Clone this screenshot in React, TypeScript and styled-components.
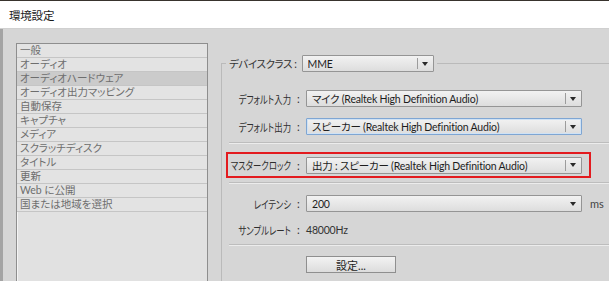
import React from "react";
import styled, { createGlobalStyle } from "styled-components";

const Global = createGlobalStyle`
  html, body { margin: 0; padding: 0; background: #d6d6d6; overflow: hidden; }
  body {
    font-family: Lato, "Noto Sans CJK JP", sans-serif;
    font-feature-settings: "palt";
    -webkit-font-smoothing: antialiased;
  }
`;

const Window = styled.div`
  width: 609px;
  height: 281px;
  display: flex;
  flex-direction: column;
  overflow: hidden;
  background: #d6d6d6;
`;

const TitleBar = styled.div`
  height: 29px;
  flex: none;
  box-sizing: border-box;
  border-top: 1px solid #38332d;
  border-bottom: 1px solid #d0d0d0;
  background: #ffffff;
  display: flex;
  align-items: center;
  padding-left: 9px;
  font-family: "Noto Sans CJK JP", sans-serif;
  font-size: 11.5px;
  letter-spacing: -0.2px;
  color: #1a1a1a;
`;

const Body = styled.div`
  flex: 1;
  display: flex;
  align-items: flex-start;
  border-left: 3px solid #a4a4a4;
  padding-top: 14px;
  min-height: 0;
`;

const List = styled.div`
  margin-left: 13px;
  width: 192px;
  height: 260px;
  flex: none;
  box-sizing: border-box;
  border: 1px solid #8e8e8e;
  background: #e1e1e1;
  box-shadow: inset 1px 1px 0 #f4f4f4;
`;

const Item = styled.div<{ $selected?: boolean }>`
  height: 13px;
  line-height: 13px;
  border-bottom: 1px solid #c5c5c5;
  padding-left: 3px;
  font-size: 10.5px;
  color: #6e6e6e;
  white-space: nowrap;
  background: ${(p) => (p.$selected ? "#cbcbcb" : "#e3e3e3")};
`;

const Frame = styled.fieldset`
  margin: 12px 0 0 13px;
  padding: 0;
  border: none;
  border-top: 1px solid #bababa;
  border-left: 1px solid #bababa;
  flex: 1;
  min-width: 0;
  height: 320px;
  display: flex;
  flex-direction: column;
  align-items: flex-start;
`;

const Legend = styled.legend`
  margin-left: 4px;
  padding: 0 3px;
  display: flex;
  align-items: center;
`;

const LegendLabel = styled.span`
  font-size: 10.5px;
  letter-spacing: -0.4px;
  color: #333;
  white-space: nowrap;
  margin-right: 5px;
`;

const Row = styled.div<{ $top: number }>`
  display: flex;
  align-items: center;
  height: 17px;
  margin-top: ${(p) => p.$top}px;
`;

const Label = styled.span<{ $width: number }>`
  width: ${(p) => p.$width}px;
  display: flex;
  justify-content: flex-end;
  font-size: 11px;
  color: #2e2e2e;
  white-space: nowrap;
  flex: none;
  transform: scaleX(0.76);
  transform-origin: right center;
`;

const Colon = styled.span`
  width: 15px;
  flex: none;
  box-sizing: border-box;
  padding-left: 6px;
  font-size: 11px;
  color: #333;
`;

const Select = styled.div<{ $width: number; $focused?: boolean }>`
  width: ${(p) => p.$width}px;
  height: 17px;
  box-sizing: border-box;
  flex: none;
  border: 1px solid ${(p) => (p.$focused ? "#7fa6d3" : "#959595")};
  box-shadow: ${(p) => (p.$focused ? "inset 0 0 0 1px #cfe2f5" : "none")};
  background: linear-gradient(#f2f2f2, #dddddd);
  display: flex;
  align-items: center;
  padding-left: 5px;
  font-size: 10.5px;
  letter-spacing: -0.2px;
  color: #1d1d1d;
  border-radius: 1px;
`;

const Value = styled.span`
  flex: 1;
  white-space: nowrap;
  overflow: hidden;
`;

const Divider = styled.span`
  width: 1px;
  height: 11px;
  background: #9c9c9c;
  margin-right: 4px;
  flex: none;
`;

const ArrowIcon = styled.svg`
  width: 6px;
  height: 4px;
  margin-right: 5px;
  flex: none;
`;

const Arrow = () => (
  <ArrowIcon viewBox="0 0 6 4">
    <path d="M0 0H6L3 4Z" fill="#2a2a2a" />
  </ArrowIcon>
);

const Separator = styled.div<{ $top: number }>`
  align-self: stretch;
  margin: ${(p) => p.$top}px 0 0 7px;
  height: 1px;
  background: #bdbdbd;
  border-bottom: 1px solid #ececec;
`;

const Highlight = styled.div`
  margin: 8px 0 0 4px;
  width: 365px;
  height: 26px;
  box-sizing: border-box;
  border: 2px solid #e31b1f;
  display: flex;
  align-items: center;
`;

const Unit = styled.span`
  margin-left: 8px;
  font-size: 11px;
  color: #444;
`;

const Plain = styled.span`
  font-size: 10.5px;
  letter-spacing: -0.2px;
  color: #333;
`;

const Button = styled.div`
  margin: 10px 0 0 84px;
  width: 90px;
  height: 17px;
  box-sizing: border-box;
  border: 1px solid #8f8f8f;
  background: linear-gradient(#f3f3f3, #dcdcdc);
  display: flex;
  align-items: center;
  justify-content: center;
  font-size: 11px;
  color: #1d1d1d;
`;

const items = [
  "一般",
  "オーディオ",
  "オーディオハードウェア",
  "オーディオ出力マッピング",
  "自動保存",
  "キャプチャ",
  "メディア",
  "スクラッチディスク",
  "タイトル",
  "更新",
  "Web に公開",
  "国または地域を選択",
];

export default function App() {
  return (
    <>
      <Global />
      <Window>
        <TitleBar>環境設定</TitleBar>
        <Body>
          <List>
            {items.map((t, i) => (
              <Item key={t} $selected={i === 2}>
                {t}
              </Item>
            ))}
          </List>
          <Frame>
            <Legend>
              <LegendLabel>デバイスクラス :</LegendLabel>
              <Select $width={132}>
                <Value>MME</Value>
                <Divider />
                <Arrow />
              </Select>
            </Legend>
            <Row $top={18}>
              <Label $width={69}>デフォルト入力</Label>
              <Colon>:</Colon>
              <Select $width={276}>
                <Value>マイク (Realtek High Definition Audio)</Value>
                <Divider />
                <Arrow />
              </Select>
            </Row>
            <Row $top={11}>
              <Label $width={69}>デフォルト出力</Label>
              <Colon>:</Colon>
              <Select $width={276} $focused>
                <Value>スピーカー (Realtek High Definition Audio)</Value>
                <Divider />
                <Arrow />
              </Select>
            </Row>
            <Separator $top={7} />
            <Highlight>
              <Row $top={0}>
                <Label $width={63}>マスタークロック</Label>
                <Colon>:</Colon>
                <Select $width={276}>
                  <Value>出力 : スピーカー (Realtek High Definition Audio)</Value>
                  <Divider />
                  <Arrow />
                </Select>
              </Row>
            </Highlight>
            <Separator $top={4} />
            <Row $top={11}>
              <Label $width={69}>レイテンシ</Label>
              <Colon>:</Colon>
              <Select $width={276}>
                <Value>200</Value>
                <Arrow />
              </Select>
              <Unit>ms</Unit>
            </Row>
            <Row $top={9}>
              <Label $width={69}>サンプルレート</Label>
              <Colon>:</Colon>
              <Plain>48000Hz</Plain>
            </Row>
            <Separator $top={6} />
            <Button>設定...</Button>
          </Frame>
        </Body>
      </Window>
    </>
  );
}
